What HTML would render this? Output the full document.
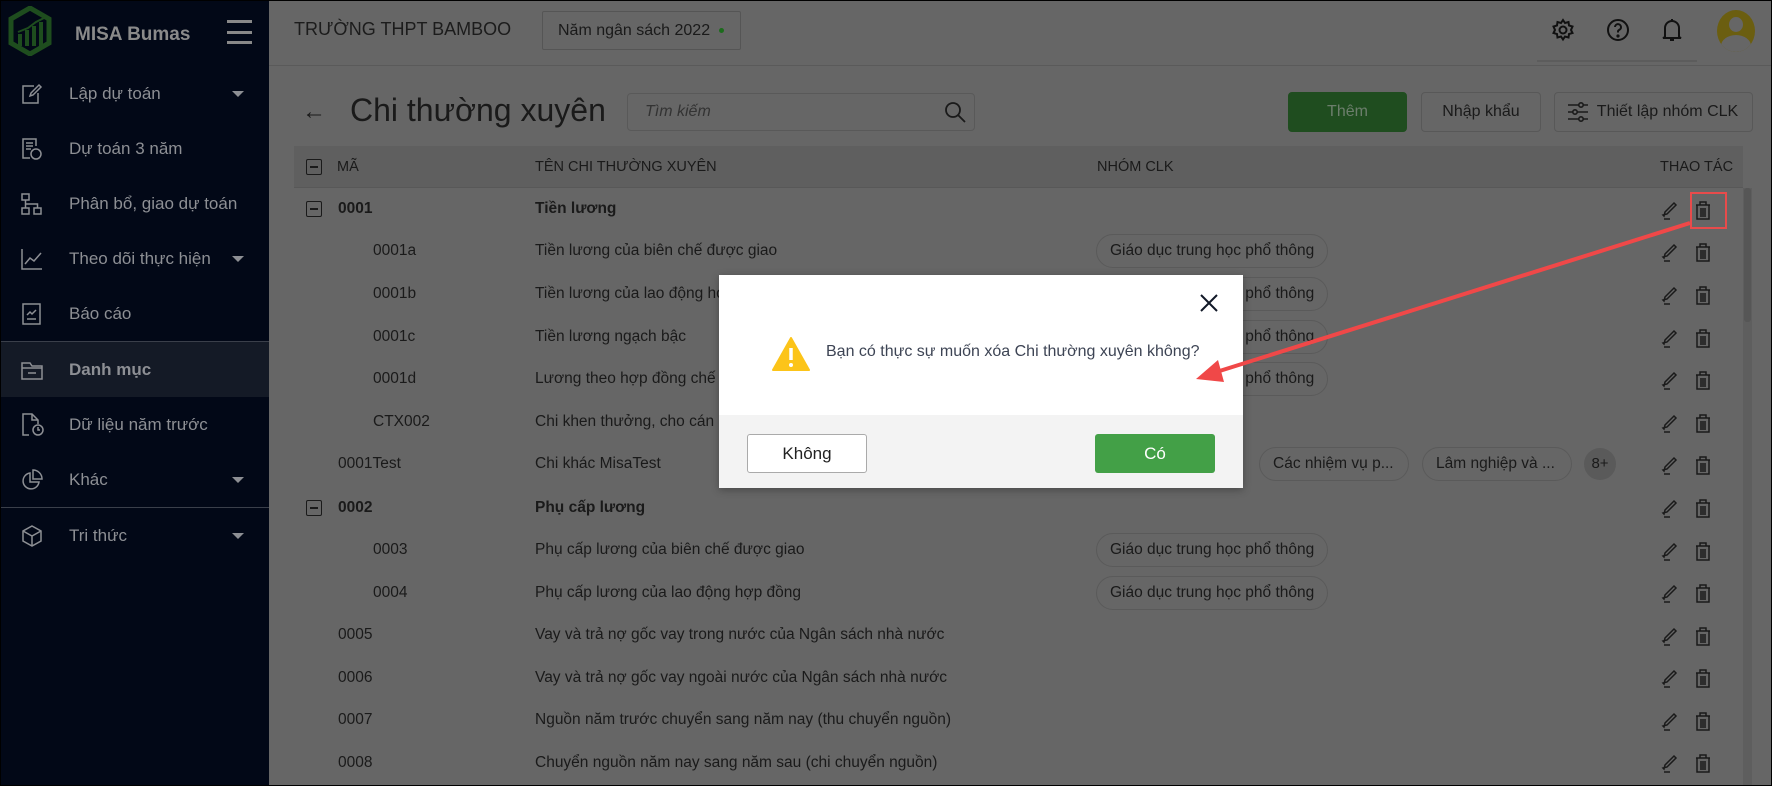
<!DOCTYPE html>
<html><head><meta charset="utf-8">
<style>
*{margin:0;padding:0;box-sizing:border-box}
body{width:1772px;height:786px;overflow:hidden;background:#666;font-family:"Liberation Sans","Noto Sans CJK SC",sans-serif;position:relative;color:#1a1a1a}
.a{position:absolute}
#sb{left:0;top:0;width:269px;height:786px;background:#020817}
.si{position:absolute;left:0;width:269px;height:55px;color:#8d8f94;font-size:17px}
.si span{position:absolute;left:69px;top:50%;transform:translateY(-50%)}
.si svg{position:absolute;left:21px;top:50%;transform:translateY(-50%)}
.caret{position:absolute;left:232px;top:50%;margin-top:-3px;border-left:6px solid transparent;border-right:6px solid transparent;border-top:6px solid #8d8f94}
.t{position:absolute;font-size:15.5px;white-space:nowrap;transform:translateY(-50%)}
.b{font-weight:bold}
.chip{position:absolute;height:34px;border:1px solid #5a5a5a;border-radius:17px;font-size:15.5px;line-height:32px;padding:0 13px;white-space:nowrap;transform:translateY(-50%);color:#1a1a1a}
.cb{position:absolute;left:306px;width:16px;height:16px;border:1.5px solid #1a1a1a;border-radius:2px;transform:translateY(-50%)}
.cb:after{content:"";position:absolute;left:3px;right:3px;top:6px;height:1.5px;background:#1a1a1a}
.btn{position:absolute;border:1px solid #585858;border-radius:4px;font-size:16px;text-align:center;color:#1a1a1a}
</style></head><body>
<div id="sb" class="a">
 <svg class="a" style="left:8px;top:6px" width="44" height="50" viewBox="0 0 44 50"><path d="M22 2 L41 13 V37 L22 48 L3 37 V13 Z" fill="none" stroke="#1e4d1e" stroke-width="5"/><path d="M12 40 V28 M19 40 V24 M26 40 V20 M33 40 V16" stroke="#1e4d1e" stroke-width="4"/><path d="M10 26 L20 22 L28 16 L36 12" stroke="#1e4d1e" stroke-width="2" fill="none"/></svg>
 <div class="a b" style="left:75px;top:24px;font-size:19px;color:#8a8a8a">MISA Bumas</div>
 <div class="a" style="left:227px;top:20px;width:25px;height:3px;background:#888"></div>
 <div class="a" style="left:227px;top:31px;width:25px;height:3px;background:#888"></div>
 <div class="a" style="left:227px;top:41px;width:25px;height:3px;background:#888"></div>
 <div class="si" style="top:66px"><svg width="22" height="22" viewBox="0 0 22 22" fill="none" stroke="#8d8f94" stroke-width="1.5"><path d="M13 3H2v17h15V10"/><path d="M9 13l1-3 8-8 2 2-8 8z"/></svg><span>Lập dự toán</span><i class="caret"></i></div>
 <div class="si" style="top:121px"><svg width="22" height="24" viewBox="0 0 22 24" fill="none" stroke="#8d8f94" stroke-width="1.5"><path d="M15 9V2H2v19h7"/><path d="M5 6h7M5 9h7M5 12h5"/><circle cx="15" cy="17" r="5"/></svg><span>Dự toán 3 năm</span></div>
 <div class="si" style="top:176px"><svg width="22" height="22" viewBox="0 0 22 22" fill="none" stroke="#8d8f94" stroke-width="1.5"><rect x="1" y="1" width="7" height="6"/><rect x="1" y="15" width="7" height="6"/><rect x="13" y="15" width="7" height="6"/><path d="M4.5 7v8M4.5 11h12v4"/></svg><span>Phân bổ, giao dự toán</span></div>
 <div class="si" style="top:231px"><svg width="22" height="22" viewBox="0 0 22 22" fill="none" stroke="#8d8f94" stroke-width="1.5"><path d="M1 1v20h20"/><path d="M4 16l5-6 4 3 7-8"/></svg><span>Theo dõi thực hiện</span><i class="caret"></i></div>
 <div class="si" style="top:286px"><svg width="22" height="22" viewBox="0 0 22 22" fill="none" stroke="#8d8f94" stroke-width="1.5"><rect x="2" y="1" width="17" height="20"/><path d="M6 16h9M6 12l3-3 2 2 4-4"/></svg><span>Báo cáo</span></div>
 <div class="a" style="left:0;top:341px;width:269px;height:1px;background:#3a3f4a"></div>
 <div class="si" style="top:342px;background:#141a26"><svg width="22" height="22" viewBox="0 0 22 22" fill="none" stroke="#8d8f94" stroke-width="1.5"><path d="M1 4h8l2 3h10v13H1z"/><path d="M1 9h20M7 14h8"/></svg><span class="b" style="font-weight:bold">Danh mục</span></div>
 <div class="si" style="top:397px"><svg width="24" height="24" viewBox="0 0 24 24" fill="none" stroke="#8d8f94" stroke-width="1.5"><path d="M8 22H2V1h9l6 6v4"/><path d="M11 1v6h6"/><circle cx="17" cy="17" r="5"/><path d="M17 14v3h2"/></svg><span>Dữ liệu năm trước</span></div>
 <div class="si" style="top:452px"><svg width="22" height="22" viewBox="0 0 22 22" fill="none" stroke="#8d8f94" stroke-width="1.5"><path d="M9 4a8 8 0 1 0 9 9H9z"/><path d="M12 1a9 9 0 0 1 9 9h-9z"/></svg><span>Khác</span><i class="caret"></i></div>
 <div class="a" style="left:0;top:507px;width:269px;height:1px;background:#3a3f4a"></div>
 <div class="si" style="top:508px"><svg width="22" height="22" viewBox="0 0 22 22" fill="none" stroke="#8d8f94" stroke-width="1.5"><path d="M11 1l9 5v10l-9 5-9-5V6z"/><path d="M2 6l9 5 9-5M11 11v10"/></svg><span>Tri thức</span><i class="caret"></i></div>
</div>

<!-- header -->
<div class="a" style="left:294px;top:19px;font-size:18px;color:#1c1c1c">TRƯỜNG THPT BAMBOO</div>
<div class="a" style="left:542px;top:11px;width:199px;height:39px;border:1px solid #555;border-radius:2px;font-size:16px;line-height:37px;padding-left:15px;color:#1a1a1a">Năm ngân sách 2022 <span style="display:inline-block;width:5px;height:5px;border-radius:50%;background:#1c6b1c;vertical-align:middle;margin-left:4px"></span></div>
<div class="a" style="left:269px;top:65px;width:1503px;height:1px;background:#5a5a5a"></div>
<svg class="a" style="left:1551px;top:18px" width="24" height="24" viewBox="0 0 24 24" fill="none" stroke="#111" stroke-width="2"><circle cx="12" cy="12" r="3.5"/><path d="M12 2l2 3 3.5-1 .5 3.5 3.5 1-1.5 3.5 1.5 3-3.5 1-.5 3.5-3.5-1-2 3-2-3-3.5 1-.5-3.5-3.5-1 1.5-3-1.5-3.5 3.5-1 .5-3.5 3.5 1z"/></svg>
<svg class="a" style="left:1606px;top:18px" width="24" height="24" viewBox="0 0 24 24" fill="none" stroke="#111" stroke-width="2"><circle cx="12" cy="12" r="10"/><path d="M9 9a3 3 0 1 1 4 3c-1 .5-1 1-1 2.5"/><circle cx="12" cy="18" r=".6" fill="#111"/></svg>
<svg class="a" style="left:1661px;top:17px" width="22" height="26" viewBox="0 0 22 26" fill="none" stroke="#111" stroke-width="2"><path d="M11 2v2M4 20V11a7 7 0 0 1 14 0v9l2 1H2z"/><path d="M9 23h4"/></svg>
<div class="a" style="left:1717px;top:10px;width:38px;height:42px;border-radius:50%;background:#6b5e10;overflow:hidden"><div class="a" style="left:12px;top:7px;width:14px;height:15px;border-radius:50%;background:#666"></div><div class="a" style="left:4px;top:25px;width:30px;height:22px;border-radius:50%;background:#666"></div></div>
<div class="a" style="left:1537px;top:60px;width:160px;height:2px;background:#5c5c5c"></div>

<!-- toolbar -->
<div class="a" style="left:302px;top:98px;font-size:24px;color:#1a1a1a">←</div>
<div class="a" style="left:350px;top:92px;font-size:32px;color:#1a1a1a">Chi thường xuyên</div>
<div class="a" style="left:627px;top:93px;width:348px;height:38px;border:1px solid #595959;border-radius:4px"></div>
<div class="a" style="left:645px;top:103px;font-size:16px;font-style:italic;color:#333">Tìm kiếm</div>
<svg class="a" style="left:943px;top:100px" width="24" height="24" viewBox="0 0 24 24" fill="none" stroke="#1a1a1a" stroke-width="1.8"><circle cx="10" cy="10" r="7"/><path d="M15 15l7 7"/></svg>
<div class="btn" style="left:1288px;top:92px;width:119px;height:40px;background:#1f4d1f;border-color:#1f4d1f;line-height:38px;color:#6c7e6c">Thêm</div>
<div class="btn" style="left:1421px;top:92px;width:120px;height:40px;line-height:38px">Nhập khẩu</div>
<div class="btn" style="left:1554px;top:92px;width:199px;height:40px;line-height:38px;padding-left:28px">Thiết lập nhóm CLK</div>
<svg class="a" style="left:1566px;top:100px" width="24" height="24" viewBox="0 0 24 24" fill="none" stroke="#1a1a1a" stroke-width="1.6"><path d="M2 5h20M2 12h20M2 19h20"/><circle cx="15" cy="5" r="2.2" fill="#666"/><circle cx="9" cy="12" r="2.2" fill="#666"/><circle cx="15" cy="19" r="2.2" fill="#666"/></svg>

<!-- table header -->
<div class="a" style="left:294px;top:146px;width:1449px;height:42px;background:#5f5f5f;border-bottom:1px solid #585858"></div>
<div class="cb" style="top:167px"></div>
<div class="t" style="left:337px;top:167px;font-size:14.5px">MÃ</div>
<div class="t" style="left:535px;top:167px;font-size:14.5px">TÊN CHI THƯỜNG XUYÊN</div>
<div class="t" style="left:1097px;top:167px;font-size:14.5px">NHÓM CLK</div>
<div class="t" style="left:1660px;top:167px;font-size:14.5px">THAO TÁC</div>
<div class="a" style="left:1743px;top:188px;width:9px;height:598px;background:#5e5e5e"></div>
<div class="a" style="left:1744px;top:188px;width:7px;height:134px;background:#565656;border-radius:3px"></div>

<!-- rows -->
<div class="cb" style="top:209px"></div><div class="t b" style="left:338px;top:209px">0001</div><div class="t b" style="left:535px;top:209px">Tiền lương</div>
<div class="t" style="left:373px;top:251px">0001a</div><div class="t" style="left:535px;top:251px">Tiền lương của biên chế được giao</div><div class="chip" style="left:1096px;top:251px">Giáo dục trung học phổ thông</div>
<div class="t" style="left:373px;top:294px">0001b</div><div class="t" style="left:535px;top:294px">Tiền lương của lao động hợp đồng</div><div class="chip" style="left:1096px;top:294px">Giáo dục trung học phổ thông</div>
<div class="t" style="left:373px;top:337px">0001c</div><div class="t" style="left:535px;top:337px">Tiền lương ngạch bậc</div><div class="chip" style="left:1096px;top:337px">Giáo dục trung học phổ thông</div>
<div class="t" style="left:373px;top:379px">0001d</div><div class="t" style="left:535px;top:379px">Lương theo hợp đồng chế độ</div><div class="chip" style="left:1096px;top:379px">Giáo dục trung học phổ thông</div>
<div class="t" style="left:373px;top:422px">CTX002</div><div class="t" style="left:535px;top:422px">Chi khen thưởng, cho cán bộ</div>
<div class="t" style="left:338px;top:464px">0001Test</div><div class="t" style="left:535px;top:464px">Chi khác MisaTest</div>
<div class="chip" style="left:1100px;top:464px">Giáo dục</div>
<div class="chip" style="left:1259px;top:464px;width:150px">Các nhiệm vụ p...</div>
<div class="chip" style="left:1422px;top:464px;width:150px">Lâm nghiệp và ...</div>
<div class="a" style="left:1584px;top:448px;width:32px;height:32px;border-radius:50%;background:#5a5a5a;font-size:15px;line-height:32px;text-align:center">8+</div>
<div class="cb" style="top:508px"></div><div class="t b" style="left:338px;top:508px">0002</div><div class="t b" style="left:535px;top:508px">Phụ cấp lương</div>
<div class="t" style="left:373px;top:550px">0003</div><div class="t" style="left:535px;top:550px">Phụ cấp lương của biên chế được giao</div><div class="chip" style="left:1096px;top:550px">Giáo dục trung học phổ thông</div>
<div class="t" style="left:373px;top:593px">0004</div><div class="t" style="left:535px;top:593px">Phụ cấp lương của lao động hợp đồng</div><div class="chip" style="left:1096px;top:593px">Giáo dục trung học phổ thông</div>
<div class="t" style="left:338px;top:635px">0005</div><div class="t" style="left:535px;top:635px">Vay và trả nợ gốc vay trong nước của Ngân sách nhà nước</div>
<div class="t" style="left:338px;top:678px">0006</div><div class="t" style="left:535px;top:678px">Vay và trả nợ gốc vay ngoài nước của Ngân sách nhà nước</div>
<div class="t" style="left:338px;top:720px">0007</div><div class="t" style="left:535px;top:720px">Nguồn năm trước chuyển sang năm nay (thu chuyển nguồn)</div>
<div class="t" style="left:338px;top:763px">0008</div><div class="t" style="left:535px;top:763px">Chuyển nguồn năm nay sang năm sau (chi chuyển nguồn)</div>

<!-- action icons -->
<svg class="a" style="left:1660px;top:188px" width="60" height="598" viewBox="0 0 60 598">
<defs><g id="ic" fill="none" stroke="#1a1a1a" stroke-width="1.5"><path d="M4 16l1-4 9-9 2 2-9 9-4 1zM4 19h6"/><g transform="translate(37,0)"><path d="M-1 5h14M3 5V2h6v3M0 5v14h12V5M4 8v9M6 8v9M8 8v9"/></g></g></defs>
<use href="#ic" y="12"/><use href="#ic" y="54"/><use href="#ic" y="97"/><use href="#ic" y="140"/><use href="#ic" y="182"/><use href="#ic" y="225"/><use href="#ic" y="267"/><use href="#ic" y="310"/><use href="#ic" y="353"/><use href="#ic" y="395"/><use href="#ic" y="438"/><use href="#ic" y="480"/><use href="#ic" y="523"/><use href="#ic" y="565"/>
</svg>
<div class="a" style="left:1690px;top:192px;width:37px;height:37px;border:2px solid #e84b4b"></div>

<!-- dialog -->
<div class="a" style="left:719px;top:275px;width:524px;height:213px;background:#fff;box-shadow:0 2px 8px rgba(0,0,0,.3)">
 <div class="a" style="left:0;top:140px;width:524px;height:73px;background:#f3f3f3"></div>
 <svg class="a" style="left:480px;top:18px" width="20" height="20" viewBox="0 0 20 20" stroke="#111827" stroke-width="2"><path d="M2 2l16 16M18 2L2 18"/></svg>
 <svg class="a" style="left:53px;top:61px" width="38" height="36" viewBox="0 0 38 36"><path d="M19 2L37 34H1z" fill="#fcc419" stroke="#fcc419" stroke-width="2" stroke-linejoin="round"/><path d="M19 12v12" stroke="#fff" stroke-width="3.5"/><circle cx="19" cy="29" r="2" fill="#fff"/></svg>
 <div class="a" style="left:107px;top:68px;font-size:16px;color:#3d4454">Bạn có thực sự muốn xóa Chi thường xuyên không?</div>
 <div class="a" style="left:28px;top:159px;width:120px;height:39px;border:1px solid #aaa;border-radius:3px;background:#fff;font-size:17px;line-height:37px;text-align:center;color:#222">Không</div>
 <div class="a" style="left:376px;top:159px;width:120px;height:39px;border-radius:3px;background:#43a047;font-size:17px;line-height:39px;text-align:center;color:#fff">Có</div>
</div>

<!-- arrow -->
<svg class="a" style="left:0;top:0" width="1772" height="786"><path d="M1690 223 L1210 374" stroke="#f04848" stroke-width="4"/><path d="M1196 379 L1218 360 L1224 382 Z" fill="#f04848"/></svg>
<div class="a" style="left:0;top:0;width:1772px;height:786px;border:1px solid #000"></div>
</body></html>
